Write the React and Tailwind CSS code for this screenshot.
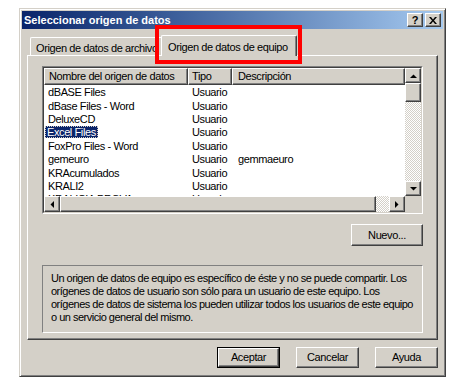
import React from 'react';

const rows = [
  { name: 'dBASE Files', type: 'Usuario', desc: '' },
  { name: 'dBase Files - Word', type: 'Usuario', desc: '' },
  { name: 'DeluxeCD', type: 'Usuario', desc: '' },
  { name: 'Excel Files', type: 'Usuario', desc: '', selected: true },
  { name: 'FoxPro Files - Word', type: 'Usuario', desc: '' },
  { name: 'gemeuro', type: 'Usuario', desc: 'gemmaeuro' },
  { name: 'KRAcumulados', type: 'Usuario', desc: '' },
  { name: 'KRALI2', type: 'Usuario', desc: '' },
  { name: 'KRALICIA PROVA', type: 'Usuario', desc: '' },
];

// raised 3d box, windows classic style
const raised =
  'bg-[#d4d0c8] border border-t-white border-l-white border-r-[#404040] border-b-[#404040] shadow-[inset_-1px_-1px_#808080]';

const Arrow = ({ dir }) => {
  const pts = {
    up: '0,4 7,4 3.5,0.5',
    down: '0,0 7,0 3.5,3.5',
    left: '4,0 4,7 0.5,3.5',
    right: '0,0 0,7 3.5,3.5',
  }[dir];
  const vertical = dir === 'up' || dir === 'down';
  return (
    <svg width={vertical ? 7 : 4} height={vertical ? 4 : 7} viewBox={vertical ? '0 0 7 4' : '0 0 4 7'}>
      <polygon points={pts} fill="#000" />
    </svg>
  );
};

const ScrollBtn = ({ dir, className }) => (
  <div className={`${raised} flex items-center justify-center shrink-0 ${className}`}>
    <Arrow dir={dir} />
  </div>
);

const track =
  'bg-[image:repeating-conic-gradient(#d4d0c8_0%_25%,#ffffff_0%_50%)] bg-[length:2px_2px]';

const Button = ({ children, isDefault }) =>
  isDefault ? (
    <div className="w-[63px] h-[21px] border border-black">
      <div className={`${raised} w-full h-full flex items-center justify-center`}>{children}</div>
    </div>
  ) : (
    <div className={`${raised} w-[63px] h-[21px] flex items-center justify-center`}>{children}</div>
  );

const App = () => {
  return (
    <div className="relative w-[476px] h-[381px] bg-white pt-[8px] pl-[19px] font-['Liberation_Sans',Arial,sans-serif] text-[11px] tracking-[-0.4px] text-black">
      <div className="w-[427px] h-[369px] bg-[#d4d0c8] border border-t-[#d4d0c8] border-l-[#d4d0c8] border-r-[#404040] border-b-[#404040] shadow-[inset_1px_1px_#ffffff,inset_-1px_-1px_#808080] p-[2px] flex flex-col">
        {/* title bar */}
        <div className="h-[18px] flex items-center pl-[2px] pr-[2px] bg-gradient-to-r from-[#0a246a] to-[#a6caf0]">
          <span className="text-white font-bold text-[11px] tracking-normal">Seleccionar origen de datos</span>
          <div className="ml-auto flex gap-[2px]">
            <div className={`${raised} w-[16px] h-[14px] flex items-center justify-center font-bold text-[11px] leading-none tracking-normal`}>?</div>
            <div className={`${raised} w-[16px] h-[14px] flex items-center justify-center`}>
              <svg width="8" height="7" viewBox="0 0 8 7">
                <path d="M0 0h2l2 2.5L6 0h2L5 3.5 8 7H6L4 4.5 2 7H0l3-3.5z" fill="#000" />
              </svg>
            </div>
          </div>
        </div>

        <div className="flex-1 flex flex-col px-[5px]">
          {/* tabs */}
          <div className="mt-[6px] h-[20px] flex items-end pl-[3px]">
            <div className="w-[133px] h-[18px] overflow-hidden whitespace-nowrap border border-b-0 border-t-white border-l-white border-r-[#404040] shadow-[inset_-1px_0_#808080] rounded-tl-[2px] pl-[5px] pt-[2px]">
              Origen de datos de archivo
            </div>
            <div className="relative z-10 -ml-[2px] -mb-[1px] w-[136px] h-[21px] bg-[#d4d0c8] whitespace-nowrap border border-b-0 border-t-white border-l-white border-r-[#404040] shadow-[inset_-1px_0_#808080] rounded-t-[2px] pl-[6px] pt-[3px]">
              Origen de datos de equipo
            </div>
          </div>

          {/* panel */}
          <div className="h-[285px] border border-t-white border-l-white border-r-[#404040] border-b-[#404040] shadow-[inset_-1px_-1px_#808080] px-[14px] pt-[10px] flex flex-col">
            {/* list view */}
            <div className="h-[148px] border border-t-[#808080] border-l-[#808080] border-r-white border-b-white">
              <div className="h-full border border-t-[#404040] border-l-[#404040] border-r-[#d4d0c8] border-b-[#d4d0c8] flex flex-col">
                <div className="flex-1 flex min-h-0">
                  <div className="flex-1 bg-white overflow-hidden">
                    <div className="flex h-[17px]">
                      <div className={`${raised} w-[144px] pl-[4px] flex items-center`}>Nombre del origen de datos</div>
                      <div className={`${raised} w-[44px] pl-[3px] flex items-center`}>Tipo</div>
                      <div className={`${raised} flex-1 pl-[5px] flex items-center`}>Descripción</div>
                    </div>
                    <div className="pt-[1px]">
                      {rows.map((r) => (
                        <div key={r.name} className="flex h-[13.4px] items-center leading-[13px]">
                          <div className="w-[144px] pl-[1px]">
                            <span
                              className={
                                r.selected
                                  ? 'px-[2px] bg-[#0a246a] text-white outline-1 outline-dotted outline-[#d4d0c8] -outline-offset-1'
                                  : 'px-[3px]'
                              }
                            >
                              {r.name}
                            </span>
                          </div>
                          <div className="w-[44px] pl-[4px]">{r.type}</div>
                          <div className="flex-1 pl-[6px]">{r.desc}</div>
                        </div>
                      ))}
                    </div>
                  </div>
                  {/* vertical scrollbar */}
                  <div className="w-[16px] flex flex-col">
                    <ScrollBtn dir="up" className="h-[15px]" />
                    <div className={`${raised} h-[19px] shrink-0`} />
                    <div className={`flex-1 ${track}`} />
                    <ScrollBtn dir="down" className="h-[15px]" />
                  </div>
                </div>
                {/* horizontal scrollbar */}
                <div className="h-[16px] flex">
                  <ScrollBtn dir="left" className="w-[16px]" />
                  <div className={`${raised} flex-1`} />
                  <div className={`w-[13px] ${track}`} />
                  <ScrollBtn dir="right" className="w-[16px]" />
                  <div className="w-[16px] bg-[#d4d0c8]" />
                </div>
              </div>
            </div>

            <div className="mt-[10px] flex justify-end">
              <div className={`${raised} w-[72px] h-[22px] flex items-center justify-center`}>Nuevo...</div>
            </div>

            {/* description */}
            <div className="mt-[19px] h-[68px] border border-t-[#808080] border-l-[#808080] border-r-white border-b-white pl-[8px] pt-[6px] leading-[13px] tracking-[-0.5px]">
              Un origen de datos de equipo es específico de éste y no se puede compartir. Los
              <br />
              orígenes de datos de usuario son sólo para un usuario de este equipo. Los
              <br />
              orígenes de datos de sistema los pueden utilizar todos los usuarios de este equipo
              <br />o un servicio general del mismo.
            </div>
          </div>

          {/* dialog buttons */}
          <div className="mt-[7px] flex justify-end gap-[16px]">
            <Button isDefault>Aceptar</Button>
            <Button>Cancelar</Button>
            <Button>Ayuda</Button>
          </div>
        </div>
      </div>

      {/* red highlight annotation */}
      <div className="absolute left-[155px] top-[25px] w-[147px] h-[39px] border-4 border-[#ff0000] pointer-events-none" />
    </div>
  );
};

export default App;
